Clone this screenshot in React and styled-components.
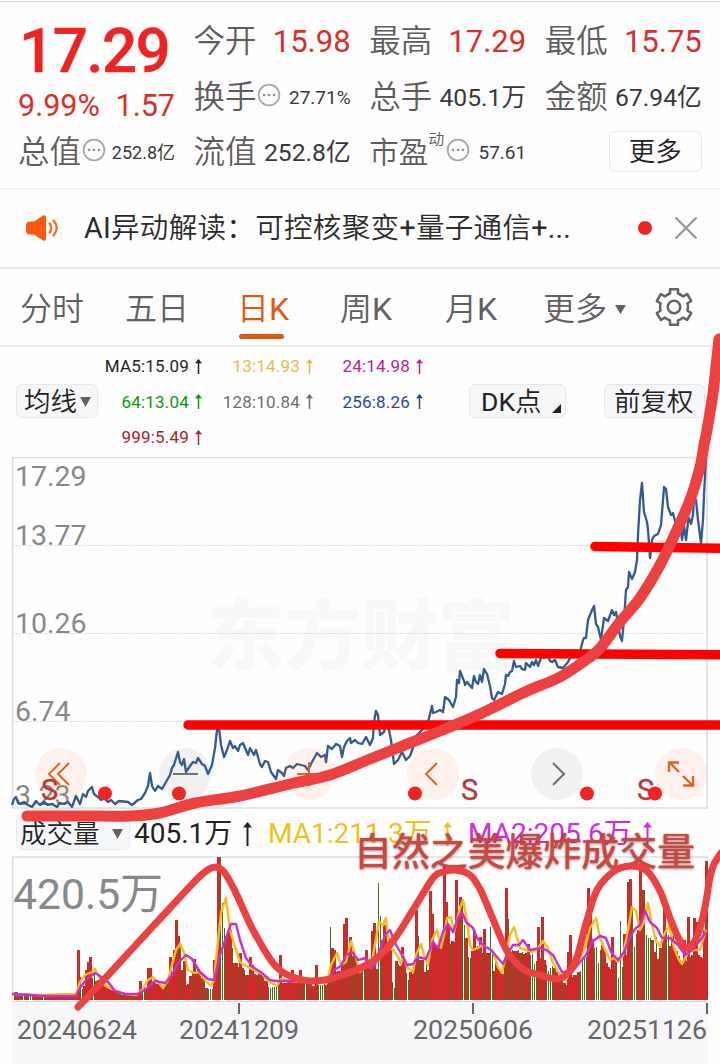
import React from "react";
import styled, { createGlobalStyle } from "styled-components";

const GlobalStyle = createGlobalStyle`
  * { box-sizing: border-box; }
  body {
    margin: 0;
    background: #fefefe;
    font-family: Roboto, "Noto Sans CJK SC", sans-serif;
    overflow: hidden;
  }
  svg { display: block; flex: none; }
  b { font-weight: 400; }
`;

const Page = styled.main`
  position: relative;
  width: 720px;
  height: 1064px;
  display: flex;
  flex-direction: column;
  overflow: hidden;
  white-space: nowrap;
  color: #333;
`;

/* ---------- quote summary ---------- */
const Quote = styled.section`
  height: 189px;
  margin-top: 1px;
  border-top: 1px solid #d6dbda;
  border-bottom: 2px solid #f3f3f4;
  padding: 12px 18px 0;
  display: grid;
  grid-template-columns: repeat(4, 157px);
  column-gap: 18.6px;
`;

const Column = styled.div`
  display: flex;
  flex-direction: column;
`;

const Price = styled.div`
  height: 71px;
  padding-left: 1px;
  font-size: 62px;
  font-weight: 500;
  line-height: 73px;
  letter-spacing: -1.6px;
  color: #f02222;
  -webkit-text-stroke: 0.4px #f02222;
`;

const Change = styled.div`
  height: 40px;
  display: flex;
  justify-content: space-between;
  font-size: 30.5px;
  line-height: 42px;
  color: #d92f2c;
`;

const Stat = styled.div`
  position: relative;
  height: 55.5px;
  display: flex;
  align-items: center;
  line-height: 40px;
`;

const Label = styled.span`
  padding-top: 1px;
  font-size: ${(p) => p.$size || 31.5}px;
  font-weight: 350;
  color: #5c5c5c;
`;

const Value = styled.span`
  margin-left: auto;
  padding-top: 1px;
  font-size: ${(p) => p.$size || 24.7}px;
  color: ${(p) => (p.$red ? "#d92f2c" : "#383838")};
`;

const Sup = styled.span`
  font-size: 16px;
  font-weight: 350;
  line-height: 16px;
  align-self: flex-start;
  margin-top: 7px;
  color: #5c5c5c;
`;

const MoreButton = styled.button`
  width: 93px;
  height: 41px;
  margin: 6px 0 0 auto;
  padding: 0;
  align-self: flex-start;
  border: 1.5px solid #e6e7ea;
  border-radius: 6px;
  background: #fefefe;
  font: 350 26.5px/34px Roboto, "Noto Sans CJK SC", sans-serif;
  color: #222;
`;

/* ---------- notice ---------- */
const Notice = styled.section`
  height: 79px;
  padding: 0 22px 2px 25px;
  border-bottom: 2px solid #e4e8e8;
  display: flex;
  align-items: center;
`;

const NoticeText = styled.span`
  margin-left: 25px;
  font-size: 28.6px;
  letter-spacing: 0.25px;
  line-height: 40px;
  font-weight: 350;
  color: #2b2b2b;
`;

const RedDot = styled.i`
  width: 14px;
  height: 14px;
  margin: 0 22px 0 auto;
  border-radius: 50%;
  background: #f02424;
`;

/* ---------- tabs ---------- */
const Tabs = styled.nav`
  height: 78px;
  padding: 0 26px 0 20px;
  border-bottom: 2px solid #e4e8e8;
  display: flex;
  align-items: center;
`;

const Tab = styled.span`
  position: relative;
  left: ${(p) => (p.$active ? -2 : 0)}px;
  width: ${(p) => p.$w}px;
  display: flex;
  align-items: center;
  padding-top: 4px;
  font-size: 32px;
  font-weight: 350;
  line-height: 44px;
  color: ${(p) => (p.$active ? "#dc5a10" : "#606060")};
  &::after {
    content: "";
    display: ${(p) => (p.$active ? "block" : "none")};
    position: absolute;
    left: 2px;
    top: 51px;
    width: 45px;
    height: 5px;
    border-radius: 3px;
    background: #dc5a10;
  }
`;

/* ---------- moving averages ---------- */
const Averages = styled.section`
  height: 109px;
  padding: 1px 16px 0;
  display: flex;
`;

const Chip = styled.button`
  width: ${(p) => p.$w}px;
  height: ${(p) => p.$h || 34}px;
  margin: ${(p) => p.$m || "36px 0 0 0"};
  padding: 1px ${(p) => p.$pr || 6}px 0 ${(p) => p.$pl || 7}px;
  display: flex;
  flex: none;
  align-items: center;
  justify-content: space-between;
  border: 1.5px solid #e5e8eb;
  border-radius: 6px;
  background: #f6f7f9;
  font: 350 26.5px/32px Roboto, "Noto Sans CJK SC", sans-serif;
  color: #222;
`;

const MaGrid = styled.div`
  display: grid;
  grid-template-columns: 105px 111px 110px;
  grid-auto-rows: 35.5px;
  justify-items: end;
`;

const Ma = styled.span`
  display: flex;
  align-items: center;
  gap: 6px;
  font-size: 17px;
  letter-spacing: 0.2px;
  line-height: 24px;
  height: 36px;
  padding-right: 1px;
  color: ${(p) => p.$c};
`;

/* ---------- charts ---------- */
const ChartArea = styled.section`
  position: relative;
  height: 353px;
`;

const Controls = styled.div`
  position: absolute;
  left: 35px;
  top: 292px;
  display: flex;
  gap: 72px;
`;

const Control = styled.button`
  width: 52px;
  height: 52px;
  padding: 0;
  border: 0;
  border-radius: 50%;
  display: grid;
  place-items: center;
  background: ${(p) => (p.$gray ? "rgba(110,110,120,.085)" : "rgba(255,100,30,.09)")};
`;

const VolumeHeader = styled.section`
  height: 46px;
  display: flex;
  padding-left: 16px;
`;

const VolumeValue = styled.span`
  width: ${(p) => p.$w}px;
  display: flex;
  align-items: center;
  gap: 11px;
  height: 49px;
  font-size: 28px;
  line-height: 40px;
  color: ${(p) => p.$c};
`;

const VolumeArea = styled.section`
  height: 147px;
`;

const Axis = styled.footer`
  flex: 1;
  margin: 0 12px;
  background: #f7f7fa;
  position: relative;
  display: flex;
  align-items: flex-start;
  font-size: 26.7px;
  line-height: 34px;
  color: #666;
`;

const DateLabel = styled.span`
  margin: 11px 0 0 ${(p) => p.$ml}px;
  width: 120px;
`;

const Tick = styled.i`
  position: absolute;
  left: ${(p) => p.$x}px;
  top: 1px;
  width: 2px;
  height: 11px;
  background: #666;
`;

const Ink = styled.svg`
  position: absolute;
  inset: 0;
  pointer-events: none;
`;

const Caption = styled.div`
  position: absolute;
  left: 354px;
  top: 829px;
  font-size: 37.9px;
  line-height: 46px;
  font-weight: 400;
  color: #cb4740;
  text-shadow: 0 0 1px #a93833, 0 1px 3px rgba(70, 20, 20, 0.55);
`;

/* ---------- data ---------- */
const PRICE = "12,805 14,799 16,797 18,803 20,804 24,802 28,805 32,807 36,801 40,805 44,802 48,805 52,804 57,807 60,803 64,804 68,802 72,807 76,796 80,804 83,794 86,797 88,791 91,788 92,787 94,794 98,797 101,800 104,798 108,802 111,800 115,804 119,801 128,802 132,805 138,800 141,799 145,793 148,786 150,773 152,786 155,791 158,786 162,789 166,782 170,775 172,768 174,765 178,752 180,762 182,765 184,759 186,772 190,766 193,762 196,763 198,758 202,764 205,766 208,774 212,765 215,748 217,730 219,728 221,745 224,757 227,750 230,741 233,748 235,746 238,751 240,745 243,743 246,750 248,755 250,748 254,755 256,750 260,764 262,767 265,761 268,762 271,772 276,779 278,770 282,773 284,776 286,768 290,766 293,768 297,764 305,766 308,770 312,762 317,753 321,757 325,755 326,762 328,746 332,749 336,744 340,746 342,757 344,747 347,741 350,738 351,743 355,740 358,743 362,744 366,737 370,745 373,738 374,722 376,711 378,715 380,735 384,732 386,725 388,725 391,740 394,764 398,760 402,752 406,760 410,756 414,745 416,736 424,728 428,722 432,706 433,713 436,712 440,710 443,712 445,697 449,700 453,707 456,697 457,680 459,683 460,671 464,681 465,685 467,682 472,688 474,676 476,682 478,684 480,675 482,682 484,669 487,674 490,686 492,698 494,700 498,692 502,694 505,684 506,675 508,676 510,672 512,671 514,661 516,667 520,666 522,669 525,670 526,663 530,667 532,662 534,665 536,660 538,666 541,658 542,650 544,658 548,656 550,661 552,662 555,660 558,667 563,668 568,662 570,658 572,655 580,652 583,640 584,638 586,638 588,620 592,610 594,606 596,624 598,627 601,640 604,618 608,621 612,610 614,615 616,612 620,636 622,641 624,620 626,590 628,587 629,572 632,579 635,572 637,560 638,535 640,500 642,483 644,512 647,522 648,530 650,558 652,540 654,536 658,534 661,525 663,500 664,487 666,489 668,507 671,515 673,513 676,525 678,528 680,520 682,540 684,526 686,540 688,522 689,518 691,524 693,515 694,498 696,500 698,520 701,543 703,520 704,495 706,458";

const FAST = [[12,994],[40,995],[76,994],[80,982],[85,975],[92,972],[95,969],[98,975],[104,985],[110,988],[118,992],[125,994],[136,995],[142,990],[148,980],[153,977],[158,982],[163,988],[168,980],[172,965],[176,950],[180,944],[184,952],[188,970],[194,973],[199,972],[205,980],[211,986],[214,980],[217,950],[221,913],[226,898],[230,930],[235,947],[240,962],[246,966],[254,970],[262,974],[268,981],[277,986],[281,979],[290,981],[327,983],[331,965],[337,953],[341,965],[346,962],[351,941],[356,958],[360,972],[366,966],[371,968],[374,950],[379,922],[383,925],[386,918],[389,948],[393,950],[398,957],[401,964],[403,955],[407,967],[413,972],[416,955],[421,944],[424,955],[428,965],[432,940],[437,930],[441,948],[444,935],[447,918],[451,917],[454,932],[460,908],[463,900],[466,915],[470,945],[473,950],[478,948],[482,945],[488,948],[493,952],[498,967],[502,973],[506,955],[510,935],[514,927],[520,948],[526,950],[533,952],[538,948],[543,941],[548,948],[553,963],[560,975],[566,980],[572,968],[580,958],[586,945],[590,928],[596,918],[600,938],[605,950],[610,960],[614,958],[618,962],[623,955],[628,930],[632,907],[636,911],[640,930],[644,922],[648,903],[652,925],[656,941],[660,946],[664,935],[669,925],[674,948],[679,960],[682,964],[688,953],[694,950],[700,950],[706,930]];
const SLOW = [[12,994],[45,996],[76,996],[80,988],[86,980],[90,977],[95,973],[100,976],[108,982],[115,991],[125,994],[138,994],[146,989],[155,981],[165,983],[172,975],[178,963],[186,955],[192,959],[200,972],[208,979],[214,980],[220,955],[226,938],[231,924],[236,924],[240,940],[246,958],[253,967],[262,973],[270,980],[276,981],[290,981],[328,980],[334,970],[341,966],[346,955],[352,952],[358,960],[366,958],[370,968],[375,965],[380,950],[385,935],[390,930],[396,945],[402,955],[407,965],[413,964],[418,957],[426,959],[433,942],[438,948],[443,932],[448,924],[453,932],[458,918],[462,912],[466,922],[473,928],[477,938],[484,946],[491,950],[497,957],[503,964],[508,953],[513,945],[519,945],[523,940],[530,950],[540,948],[546,950],[553,955],[562,972],[572,972],[580,962],[586,955],[592,942],[600,936],[606,938],[611,952],[618,960],[624,952],[631,935],[636,928],[640,925],[645,911],[650,922],[657,928],[662,938],[670,938],[678,945],[685,955],[692,950],[698,943],[706,932]];

const PEAKS = {
  78: [950, 1], 80: [977, 0], 86: [970, 1], 88: [962, 1], 90: [957, 1], 94: [974, 0], 140: [981, 1], 144: [985, 0],
  148: [968, 1], 150: [968, 1], 170: [957, 1], 174: [950, 1], 176: [920, 1], 178: [936, 1], 180: [948, 0], 184: [961, 1],
  186: [985, 1], 188: [984, 1], 194: [959, 1], 198: [969, 1], 206: [988, 1], 208: [989, 0], 210: [989, 0], 212: [989, 0],
  214: [960, 1], 216: [960, 1], 218: [857, 1], 220: [857, 0], 222: [903, 0], 224: [928, 0], 226: [936, 1], 228: [932, 1],
  230: [930, 1], 232: [948, 0], 234: [963, 1], 236: [963, 1], 238: [967, 0], 240: [953, 1], 242: [968, 1], 244: [970, 0],
  250: [957, 1], 252: [965, 1], 268: [987, 0], 270: [988, 0], 272: [987, 0], 274: [987, 0], 280: [955, 1], 292: [970, 1],
  300: [970, 1], 316: [965, 1], 330: [927, 0], 332: [948, 1], 334: [950, 1], 344: [924, 1], 346: [918, 1], 350: [937, 1],
  366: [950, 1], 372: [931, 1], 374: [923, 1], 378: [883, 0], 380: [916, 0], 384: [925, 1], 392: [982, 0], 394: [988, 0],
  402: [947, 1], 406: [973, 0], 408: [980, 0], 416: [910, 1], 418: [936, 0], 424: [972, 1], 430: [891, 1], 432: [914, 1],
  444: [865, 1], 446: [902, 1], 450: [944, 0], 456: [880, 1], 460: [897, 1], 462: [900, 0], 464: [925, 0], 468: [957, 0],
  470: [958, 0], 474: [931, 1], 480: [937, 1], 484: [929, 1], 490: [927, 0], 494: [971, 1], 506: [888, 1], 508: [919, 0],
  528: [944, 1], 538: [927, 1], 542: [917, 1], 546: [965, 0], 548: [971, 0], 550: [968, 0], 568: [952, 1], 570: [935, 1],
  588: [888, 1], 590: [912, 1], 598: [963, 0], 600: [950, 0], 612: [937, 1], 618: [978, 0], 620: [921, 0], 622: [967, 0],
  624: [934, 1], 628: [882, 1], 630: [879, 1], 632: [910, 0], 640: [867, 1], 642: [890, 1], 644: [890, 0], 646: [935, 0],
  648: [938, 0], 650: [938, 0], 656: [937, 0], 664: [895, 1], 666: [930, 0], 668: [935, 0], 684: [940, 1], 688: [917, 1],
  694: [918, 1], 696: [922, 1], 704: [930, 1], 706: [861, 1],
};

const levelAt = (series, x) => {
  const i = Math.max(1, series.findIndex((p) => p[0] >= x));
  const [x0, y0] = series[i - 1];
  const [x1, y1] = series[i];
  return y0 + ((y1 - y0) * (x - x0)) / (x1 - x0);
};

const noise = (n) => {
  const v = Math.sin(n * 12.9898) * 43758.5453;
  return v - Math.floor(v);
};

const BARS = [];
for (let x = 14; x <= 706; x += 2) {
  const peak = PEAKS[x];
  if (peak) {
    BARS.push({ x, y: peak[0], up: !!peak[1] });
  } else {
    const base = Math.max(levelAt(SLOW, x), levelAt(FAST, x));
    const room = 1000 - base;
    const y = Math.round(base + room * (noise(Math.floor(x / 6)) * 0.3 + noise(x) * 0.08 - 0.08));
    const quiet = x < 76;
    BARS.push({ x, y: Math.min(quiet ? y - 2 : y, 995), up: noise(x * 3 + 7) > (quiet ? 0.2 : 0.3) });
  }
}

const points = (list) => list.map((p) => p.join(",")).join(" ");

// Catmull-Rom spline through the given points
const smooth = (list) =>
  list.reduce((d, p, i) => {
    if (!i) return `M${p[0]} ${p[1]}`;
    const a = list[Math.max(0, i - 2)];
    const b = list[i - 1];
    const c = list[Math.min(list.length - 1, i + 1)];
    return `${d} C${b[0] + (p[0] - a[0]) / 6} ${b[1] + (p[1] - a[1]) / 6} ${p[0] - (c[0] - b[0]) / 6} ${p[1] - (c[1] - b[1]) / 6} ${p[0]} ${p[1]}`;
  }, "");

const TREND = [[27,816],[80,816],[130,816],[160,813],[195,803],[240,796],[290,784],[330,775],[370,759],[400,747],[440,731],[480,714],[525,692],[560,677],[590,657],[601,647],[620,622],[640,598],[660,565],[675,534],[690,500],[700,467],[704,445],[707,430],[713,393],[717,357],[719,339]];
const WAVE = [[78,1007],[100,984],[133,948],[170,908],[197,879],[209,869],[216,867],[224,872],[233,887],[240,902],[253,930],[273,963],[290,976],[313,981],[340,976],[373,961],[393,941],[413,910],[433,878],[443,872],[455,870],[470,875],[480,889],[490,912],[507,951],[523,969],[540,975],[557,979],[568,973],[577,957],[587,920],[597,890],[613,872],[630,866],[647,871],[660,891],[670,918],[680,941],[688,948],[698,934],[705,907],[710,877],[714,864],[721,853]];

/* ---------- icons ---------- */
const Arrow = ({ h = 15, w = 7, s = 1.5 }) => (
  <svg width={w} height={h} viewBox={`0 0 ${w} ${h}`} fill="none" stroke="currentColor" strokeWidth={s}>
    <path d={`M${w / 2} ${h}V1`} />
    <path d={`M0 ${w * 0.6}L${w / 2} 0L${w} ${w * 0.6}Z`} fill="currentColor" stroke="none" />
  </svg>
);

const Down = ({ w = 11, h = 10, c = "#5f6163" }) => (
  <svg width={w} height={h} viewBox="0 0 10 10" preserveAspectRatio="none">
    <path d="M0 0h10L5 10z" fill={c} />
  </svg>
);

const DotsIcon = styled.svg`
  margin: -5px 0 0 ${(p) => p.$ml || 0}px;
`;

const Dots = ({ ml }) => (
  <DotsIcon width="24" height="24" viewBox="0 0 24 24" $ml={ml}>
    <circle cx="12" cy="12" r="10.4" fill="none" stroke="#a5a5a5" strokeWidth="1.7" />
    {[7, 12, 17].map((x) => (
      <circle key={x} cx={x} cy="12" r="1.3" fill="#8f8f8f" />
    ))}
  </DotsIcon>
);

const Speaker = () => (
  <svg width="34" height="28" viewBox="0 0 34 28">
    <path d="M5 7.500h4L18 1.600q3-1.200 3 1.800v21.200q0 3-3 1.800L9 20.500H5q-4 0-4-4v-5q0-4 4-4z" fill="#ff5a0a" />
    <path d="M24.500 9.500q3.500 4.500 0 9M28.500 6.500q6.500 7.500 0 15" fill="none" stroke="#ff6a20" strokeWidth="2.300" strokeLinecap="round" />
  </svg>
);

const Gear = () => (
  <svg width="40" height="40" viewBox="0 0 40 40" fill="none" stroke="#636363" strokeWidth="2.500" strokeLinejoin="round">
    <path d="M16 2.200h8v4.300q2.800 1 5 2.900l4.200-2.300 4 6.900-3.700 2.300q1 3.700 0 7.400l3.700 2.300-4 6.900-4.200-2.300q-2.200 1.900-5 2.900v4.300h-8v-4.300q-2.800-1-5-2.900l-4.200 2.300-4-6.900 3.700-2.300q-1-3.700 0-7.400l-3.700-2.300 4-6.900 4.200 2.300q2.200-1.900 5-2.900z" />
    <circle cx="20" cy="20" r="6.300" />
  </svg>
);

const Corner = styled.svg`
  margin-top: 13px;
`;

const Glyph = ({ d, c = "#dc6420", w = 1.9 }) => (
  <svg width="32" height="32" viewBox="0 0 32 32" fill="none" stroke={c} strokeWidth={w}>
    <path d={d} />
  </svg>
);

/* ---------- sections ---------- */
const PriceChart = () => (
  <svg width="720" height="353" viewBox="0 456 720 353">
    <text x="207" y="664" fontSize="77" fontWeight="900" fill="#f8f8f8" textLength="308">东方财富</text>
    <path d="M12.500 457.500H707V808H12.500z" fill="none" stroke="#dedede" strokeWidth="1.600" />
    <path d="M13 545.500H706M13 633.500H706M13 721.500H706" stroke="#d3d3d3" strokeDasharray="1.500 1.500" />
    <g fontSize="28.500" fill="#888">
      <text x="15" y="486">17.29</text>
      <text x="15" y="545">13.77</text>
      <text x="15" y="633">10.26</text>
      <text x="15" y="721">6.74</text>
      <text x="15" y="805">3.23</text>
    </g>
    <polyline points={PRICE} fill="none" stroke="#325a92" strokeWidth="2.300" strokeLinejoin="round" />
  </svg>
);

const Markers = () => (
  <Ink width="720" height="353" viewBox="0 456 720 353">
    <g fontSize="29" fill="#bf3434" stroke="#bf3434" strokeWidth="0.3">
      <text x="41" y="800">S</text>
      <text x="461" y="800">S</text>
      <text x="637" y="800">S</text>
    </g>
    <g fill="#f02424">
      {[105, 179, 415, 587, 655].map((x) => (
        <circle key={x} cx={x} cy="793.500" r="7" />
      ))}
    </g>
  </Ink>
);

const VolumeChart = () => (
  <svg width="720" height="147" viewBox="0 855 720 147">
    <path d="M12.500 1000V857H707V1000" fill="none" stroke="#dedede" strokeWidth="1.600" />
    <path d="M12 1001.500H708" stroke="#efd5d5" />
    <text x="13" y="909" fontSize="42.700" fill="#888">420.5万</text>
    <g shapeRendering="crispEdges">
      {BARS.filter((b) => b.up).map((b) => (
        <rect key={b.x} x={b.x - 1} y={b.y} width="3" height={1000 - b.y} fill="#cf2a2a" />
      ))}
      {BARS.filter((b) => !b.up).map((b) => (
        <rect key={b.x} x={b.x} y={b.y} width="1" height={1000 - b.y} fill="#3c741a" />
      ))}
    </g>
    <polyline points={points(FAST)} fill="none" stroke="#f5bd17" strokeWidth="2.400" strokeLinejoin="round" />
    <polyline points={points(SLOW)} fill="none" stroke="#cb30cb" strokeWidth="2.400" strokeLinejoin="round" />
  </svg>
);

export default function App() {
  return (
    <Page>
      <GlobalStyle />
      <Quote>
        <Column>
          <Price>17.29</Price>
          <Change><span>9.99%</span><span>1.57</span></Change>
          <Stat><Label>总值</Label><Dots ml={1} /><Value $size={18}>252.8亿</Value></Stat>
        </Column>
        <Column>
          <Stat><Label>今开</Label><Value $size={31} $red>15.98</Value></Stat>
          <Stat><Label>换手</Label><Dots ml={0} /><Value $size={19}>27.71%</Value></Stat>
          <Stat><Label>流值</Label><Value>252.8亿</Value></Stat>
        </Column>
        <Column>
          <Stat><Label>最高</Label><Value $size={31} $red>17.29</Value></Stat>
          <Stat><Label>总手</Label><Value>405.1万</Value></Stat>
          <Stat><Label $size={29.5}>市盈</Label><Sup>动</Sup><Dots ml={2} /><Value $size={19}>57.61</Value></Stat>
        </Column>
        <Column>
          <Stat><Label>最低</Label><Value $size={31} $red>15.75</Value></Stat>
          <Stat><Label>金额</Label><Value>67.94亿</Value></Stat>
          <Stat><MoreButton>更多</MoreButton></Stat>
        </Column>
      </Quote>

      <Notice>
        <Speaker />
        <NoticeText><b>AI</b>异动解读：可控核聚变<b>+</b>量子通信<b>+...</b></NoticeText>
        <RedDot />
        <svg width="24" height="24" viewBox="0 0 24 24" stroke="#999" strokeWidth="2.400">
          <path d="M1.500 1.500l21 21M22.500 1.500l-21 21" />
        </svg>
      </Notice>

      <Tabs>
        <Tab $w={105}>分时</Tab>
        <Tab $w={114}>五日</Tab>
        <Tab $w={101} $active>日<b>K</b></Tab>
        <Tab $w={105}>周<b>K</b></Tab>
        <Tab $w={98}>月<b>K</b></Tab>
        <Tab $w={111}>更多&nbsp;<Down w={11} h={9} /></Tab>
        <Gear />
      </Tabs>

      <Averages>
        <Chip $w={82}>均线<Down w={11} h={10} /></Chip>
        <MaGrid>
          <Ma $c="#222">MA5:15.09<Arrow /></Ma>
          <Ma $c="#e9ba48">13:14.93<Arrow /></Ma>
          <Ma $c="#b5258c">24:14.98<Arrow /></Ma>
          <Ma $c="#0c960c">64:13.04<Arrow /></Ma>
          <Ma $c="#6d6d6d">128:10.84<Arrow /></Ma>
          <Ma $c="#2b449c">256:8.26<Arrow /></Ma>
          <Ma $c="#a6232b">999:5.49<Arrow /></Ma>
        </MaGrid>
        <Chip $w={97} $m="36px 0 0 45px" $pl={11} $pr={4}>
          <span><b>DK</b>点</span>
          <Corner width="9" height="9" viewBox="0 0 9 9"><path d="M9 0v9H0z" fill="#222" /></Corner>
        </Chip>
        <Chip $w={101} $m="36px 0 0 38px" $pl={9}>前复权</Chip>
      </Averages>

      <ChartArea>
        <PriceChart />
        <Controls>
          <Control><Glyph d="M15 5L4 16l11 11M24 5L13 16l11 11" /></Control>
          <Control $gray><Glyph d="M4 16h25" c="#6b6b6b" /></Control>
          <Control><Glyph d="M4 16h24M16 4v24" /></Control>
          <Control><Glyph d="M20 5L9 16l11 11" /></Control>
          <Control $gray><Glyph d="M12 5l11 11-11 11" c="#6b6b6b" /></Control>
          <Control><Glyph w={2.3} d="M4 14V4.500h10M4.500 4.500L14 14M28 18v9.500H18M27.500 27.500L18 18" /></Control>
        </Controls>
        <Markers />
      </ChartArea>

      <VolumeHeader>
        <Chip $w={114} $h={34} $m="7px 4px 0 0" $pl={3} $pr={6}>成交量<Down w={11} h={10} /></Chip>
        <VolumeValue $w={134} $c="#222">405.1万<Arrow h={24} w={9} s={2} /></VolumeValue>
        <VolumeValue $w={200} $c="#efc21b">MA1:211.3万<Arrow h={24} w={9} s={2} /></VolumeValue>
        <VolumeValue $w={200} $c="#d32bd8">MA2:205.6万<Arrow h={24} w={9} s={2} /></VolumeValue>
      </VolumeHeader>

      <VolumeArea><VolumeChart /></VolumeArea>

      <Axis>
        <Tick $x={226} /><Tick $x={460} /><Tick $x={694} />
        <DateLabel $ml={5}>20240624</DateLabel>
        <DateLabel $ml={42}>20241209</DateLabel>
        <DateLabel $ml={114}>20250606</DateLabel>
        <DateLabel $ml={54}>20251126</DateLabel>
      </Axis>

      <Caption>自然之美爆炸成交量</Caption>
      <Ink width="720" height="1064" viewBox="0 0 720 1064" fill="none" strokeLinecap="round" strokeLinejoin="round">
        <path d="M188 725H730M500 653.500L730 654.800M595 546.500L730 548.500" stroke="#ff0000" strokeWidth="9.500" />
        <path d={smooth(TREND)} stroke="#ec4141" strokeWidth="11" />
        <path d={smooth(WAVE)} stroke="#ec4141" strokeWidth="7" />
      </Ink>
    </Page>
  );
}
